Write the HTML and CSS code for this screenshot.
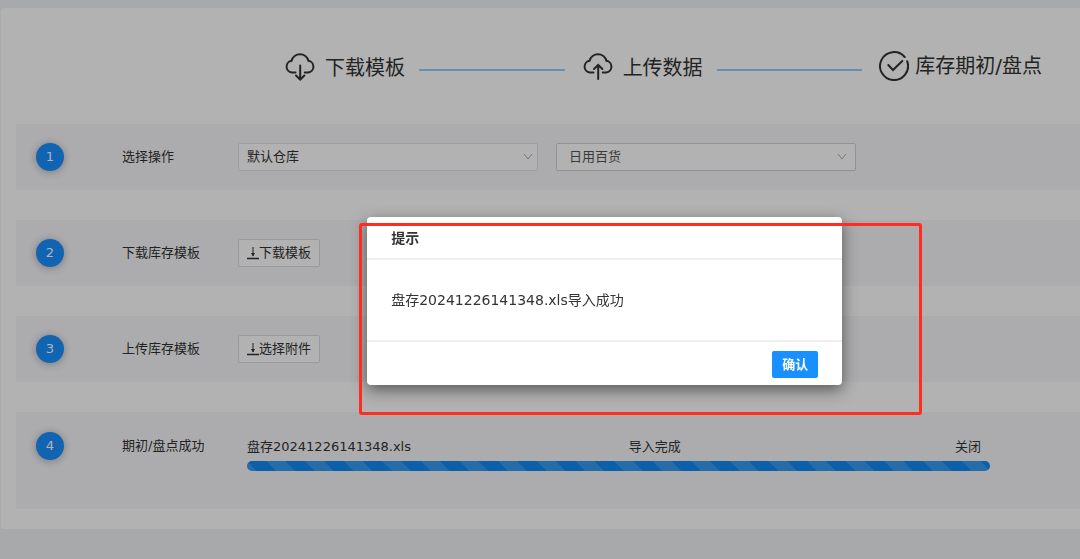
FILE: index.html
```html
<!DOCTYPE html>
<html lang="zh-CN">
<head>
  <meta charset="UTF-8">
  <meta name="viewport" content="width=device-width, initial-scale=1.0">
  <title>库存期初/盘点</title>
  <link rel="stylesheet" href="styles.css">
</head>
<body>

  <main class="card">
    <header class="steps">
      <div class="step">
        <svg class="step-icon" width="32" height="32" viewBox="0 0 32 32">
          <path d="M11.500 20.500H7.800A5.900 5.900 0 0 1 7.600 8.800A8.700 8.700 0 0 1 24.400 8.800A5.900 5.900 0 0 1 24.200 20.500H20.800"/>
          <path d="M16.200 13.500V27M12 23.500L16.200 27.500L20.400 23.500"/>
        </svg>
        <span>下载模板</span>
      </div>
      <div class="step-line"></div>
      <div class="step">
        <svg class="step-icon" width="32" height="32" viewBox="0 0 32 32">
          <path d="M11.500 20.500H7.800A5.900 5.900 0 0 1 7.600 8.800A8.700 8.700 0 0 1 24.400 8.800A5.900 5.900 0 0 1 24.200 20.500H20.800"/>
          <path d="M16.200 27V13M12 17L16.200 13L20.400 17"/>
        </svg>
        <span>上传数据</span>
      </div>
      <div class="step-line"></div>
      <div class="step step-last">
        <svg class="step-icon" width="30" height="30" viewBox="0 0 30 30">
          <path d="M25.700 6A14 14 0 1 0 28.200 10.300"/>
          <path d="M9.300 14L14 19L23.300 10"/>
        </svg>
        <span>库存期初/盘点</span>
      </div>
    </header>

    <section class="rows">
      <div class="row">
        <span class="num">1</span>
        <span class="label">选择操作</span>
        <div class="control">
          <div class="select-box">
            <select class="select" aria-label="仓库">
              <option>默认仓库</option>
            </select>
            <svg class="arrow" width="10" height="8" viewBox="0 0 10 8"><path d="M1 1L5 6L9 1"/></svg>
          </div>
          <div class="select-box">
            <select class="select select-dark" aria-label="分类">
              <option>日用百货</option>
            </select>
            <svg class="arrow arrow-inset" width="10" height="8" viewBox="0 0 10 8"><path d="M1 1L5 6L9 1"/></svg>
          </div>
        </div>
      </div>

      <div class="row">
        <span class="num">2</span>
        <span class="label">下载库存模板</span>
        <div class="control">
          <button type="button" class="btn">
            <svg width="12" height="14" viewBox="0 0 12 14"><path d="M6 1V10" stroke="currentColor"/><path d="M4 7H8L6 10.500Z" fill="currentColor"/><path d="M0 12.500H12" stroke="currentColor" stroke-width="1.500"/></svg>下载模板
          </button>
        </div>
      </div>

      <div class="row">
        <span class="num">3</span>
        <span class="label">上传库存模板</span>
        <div class="control">
          <button type="button" class="btn">
            <svg width="12" height="14" viewBox="0 0 12 14"><path d="M6 1V10" stroke="currentColor"/><path d="M4 7H8L6 10.500Z" fill="currentColor"/><path d="M0 12.500H12" stroke="currentColor" stroke-width="1.500"/></svg>选择附件
          </button>
        </div>
      </div>

      <div class="row row-result">
        <span class="num">4</span>
        <span class="label">期初/盘点成功</span>
        <div class="result">
          <div class="result-info">
            <span>盘存20241226141348.xls</span>
            <span>导入完成</span>
            <a class="close" href="#">关闭</a>
          </div>
          <div class="progress"></div>
        </div>
      </div>
    </section>
  </main>

  <div class="mask"></div>

  <div class="modal" role="dialog" aria-labelledby="modal-title">
    <h2 class="modal-title" id="modal-title">提示</h2>
    <p class="modal-body">盘存20241226141348.xls导入成功</p>
    <div class="modal-footer">
      <button type="button" class="btn-primary">确认</button>
    </div>
  </div>

  <div class="highlight"></div>

</body>
</html>
```
FILE: styles.css
```css
* {
  box-sizing: border-box;
}

body {
  margin: 0;
  padding: 8px 0 30px 1px;
  min-height: 100vh;
  font-family: "DejaVu Sans", "Noto Sans CJK SC", sans-serif;
  font-size: 13px;
  line-height: 20px;
  color: #333;
  background: #f0f2f5;
}

.card {
  padding: 42px 0 20px 15px;
  background: #fff;
  border-radius: 4px 0 0 4px;
}

/* 顶部步骤 */
.steps {
  display: flex;
  align-items: flex-start;
  padding: 0 38px 0 268px;
  margin-bottom: 40px;
}

.step {
  display: flex;
  align-items: center;
  gap: 9px;
  padding-top: 2px;
  font-size: 20px;
  line-height: 32px;
  white-space: nowrap;
}

.step-last {
  gap: 6px;
  padding-top: 0;
}

.step-icon {
  fill: none;
  stroke: #333;
  stroke-width: 2;
  stroke-linecap: round;
}

.step-line {
  flex: 1;
  height: 2px;
  margin: 19px 17px 0 14px;
  background: #93cbff;
}

/* 操作行 */
.rows {
  display: flex;
  flex-direction: column;
  gap: 30px;
}

.row {
  display: flex;
  align-items: center;
  min-height: 66px;
  padding: 0 20px;
  background: #f7f7fa;
}

.num {
  width: 28px;
  height: 28px;
  margin-right: 58px;
  border-radius: 50%;
  line-height: 28px;
  text-align: center;
  color: #fff;
  background: #1890ff;
  box-shadow: 0 1px 8px rgba(0, 0, 0, 0.3);
}

.label {
  width: 116px;
}

.control {
  display: flex;
  gap: 18px;
}

.select-box {
  position: relative;
  width: 300px;
}

.select {
  display: block;
  width: 100%;
  height: 28px;
  padding: 0 30px 0 8px;
  border: 1px solid #e2e2e5;
  border-radius: 2px;
  appearance: none;
  font: inherit;
  color: #333;
  background: #fff;
}

.select-dark {
  padding-left: 12px;
  border-color: #d2d2d6;
  color: #555;
}

.arrow {
  position: absolute;
  top: 10px;
  right: 5px;
  fill: none;
  stroke: #aaa;
  pointer-events: none;
}

.arrow-inset {
  right: 9px;
}

.btn {
  display: flex;
  align-items: center;
  height: 28px;
  padding: 0 8px;
  border: 1px solid #dcdcdf;
  border-radius: 2px;
  font: inherit;
  color: #333;
  background: #fff;
}

.row-result {
  align-items: flex-start;
  min-height: 97px;
  padding-top: 20px;
}

.row-result .label {
  padding-top: 4px;
}

.result {
  flex: 1;
  padding: 5px 70px 0 9px;
}

.result-info {
  display: grid;
  grid-template-columns: 52% 1fr auto;
  padding-right: 9px;
  margin-bottom: 4px;
}

.close {
  color: inherit;
  text-decoration: none;
}

.progress {
  height: 10px;
  border-radius: 5px;
  background-color: #138af0;
  background-image: linear-gradient(45deg, transparent 25%, rgba(255, 255, 255, 0.15) 25%, rgba(255, 255, 255, 0.15) 50%, transparent 50%, transparent 75%, rgba(255, 255, 255, 0.15) 75%);
  background-size: 5.2% 39px;
}

.mask {
  position: fixed;
  inset: 0;
  background: rgba(0, 0, 0, 0.3);
}

/* 提示弹窗 */
.modal {
  position: absolute;
  top: 217px;
  left: 34%;
  width: 475px;
  border-radius: 4px;
  background: #fff;
  box-shadow: 0 5px 15px rgba(0, 0, 0, 0.5);
}

.modal-title {
  margin: 0;
  padding: 11px 24px 10px;
  border-bottom: 2px solid #f0f0f0;
  font-size: 14px;
  line-height: 20px;
}

.modal-body {
  margin: 0;
  padding: 30px 24px;
  font-size: 14px;
  line-height: 20px;
}

.modal-footer {
  display: flex;
  justify-content: flex-end;
  padding: 9px 24px 7px;
  border-top: 2px solid #f0f0f0;
}

.btn-primary {
  height: 27px;
  padding: 0 10px;
  border: 0;
  border-radius: 2px;
  font: inherit;
  font-weight: bold;
  color: #fff;
  background: #1890ff;
}

.highlight {
  position: absolute;
  top: 223px;
  left: 359px;
  width: 563px;
  height: 192px;
  border: 3px solid #ff2d20;
  border-radius: 3px;
  pointer-events: none;
}
```
